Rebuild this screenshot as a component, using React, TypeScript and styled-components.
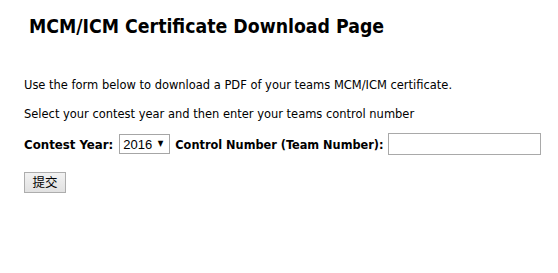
import styled, { createGlobalStyle } from 'styled-components';

const GlobalStyle = createGlobalStyle`
  html, body {
    margin: 0;
    padding: 0;
    background: #fff;
  }
  body {
    font-family: 'DejaVu Sans Condensed', 'DejaVu Sans', sans-serif;
    color: #000;
  }
`;

const Page = styled.div`
  padding: 0 24px;
  width: 558px;
  height: 273px;
  box-sizing: border-box;
`;

const Title = styled.h2`
  margin: 0;
  padding: 16px 0 0 5px;
  font-size: 19.3px;
  font-weight: bold;
  line-height: 22px;
`;

const Form = styled.form`
  display: flex;
  flex-direction: column;
  align-items: flex-start;
  margin-top: 39px;
`;

const Text = styled.p<{ $after: number }>`
  margin: 0 0 ${(p) => p.$after}px;
  font-size: 12.75px;
  line-height: 15px;
`;

const Row = styled.div`
  display: flex;
  align-items: center;
  height: 22px;
  margin-bottom: 17px;
`;

const Label = styled.label<{ $size: number }>`
  font-size: ${(p) => p.$size}px;
  font-weight: bold;
  white-space: nowrap;
`;

const SelectWrap = styled.span`
  position: relative;
  display: inline-flex;
  margin: 0 5px 0 6px;

  &::after {
    content: '▼';
    position: absolute;
    right: 7px;
    top: 5px;
    font-size: 8px;
    line-height: 10px;
    color: #000;
    pointer-events: none;
  }
`;

const Select = styled.select`
  appearance: none;
  font-family: 'Liberation Sans', Arial, sans-serif;
  font-size: 13px;
  height: 20px;
  width: 51px;
  padding: 0 0 0 3px;
  border: 1px solid #a6a6a6;
  border-radius: 0;
  background: #fff;
  color: #000;
`;

const Input = styled.input`
  margin-left: 4px;
  width: 153px;
  height: 22px;
  box-sizing: border-box;
  border: 1px solid #a9a9a9;
  padding: 0 2px;
`;

const Submit = styled.button`
  width: 42px;
  height: 21px;
  padding: 0;
  font-family: 'Noto Sans CJK SC', sans-serif;
  font-size: 12.5px;
  line-height: 1;
  border: 1px solid #adadad;
  border-radius: 0;
  background: linear-gradient(#f2f2f2, #e1e1e1);
  color: #000;
`;

export default function App() {
  return (
    <>
      <GlobalStyle />
      <Page>
        <Title>MCM/ICM Certificate Download Page</Title>
        <Form onSubmit={(e) => e.preventDefault()}>
          <Text $after={14}>Use the form below to download a PDF of your teams MCM/ICM certificate.</Text>
          <Text $after={12}>Select your contest year and then enter your teams control number</Text>
          <Row>
            <Label $size={13.1} htmlFor="year">Contest Year:</Label>
            <SelectWrap>
              <Select id="year" defaultValue="2016">
                <option>2016</option>
                <option>2015</option>
              </Select>
            </SelectWrap>
            <Label $size={12.6} htmlFor="team">Control Number (Team Number):</Label>
            <Input id="team" type="text" />
          </Row>
          <Submit type="submit">提交</Submit>
        </Form>
      </Page>
    </>
  );
}
